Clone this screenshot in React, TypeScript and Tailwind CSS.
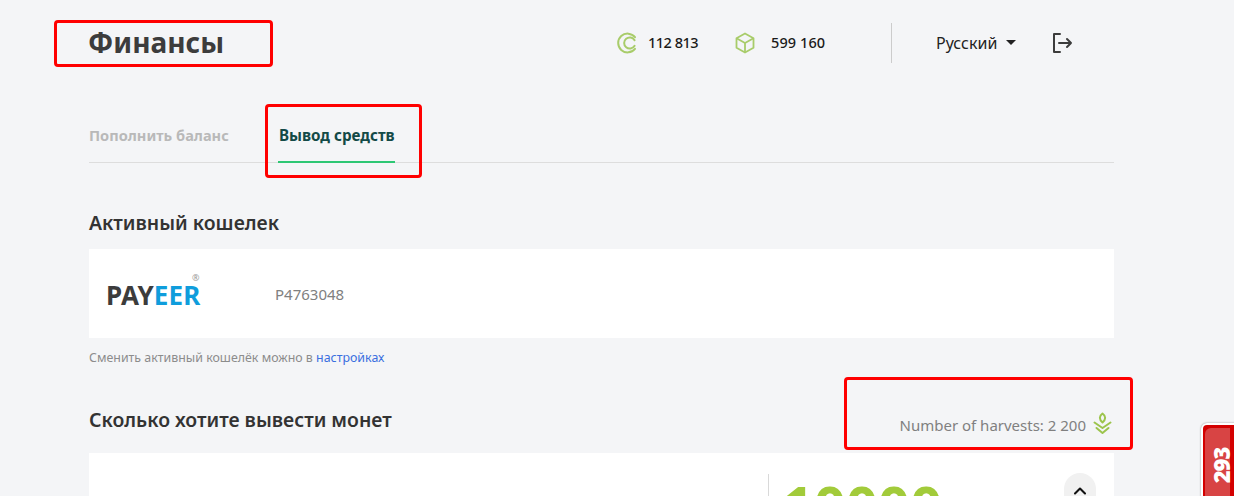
import React from 'react';
import { ChevronUp } from 'lucide-react';

const CoinIcon = () => (
  <svg width="22" height="22" viewBox="0 0 22 22" fill="none" stroke="#a8cc6a" strokeWidth="2" strokeLinecap="round">
    <path d="M19 5.2A9.4 9.4 0 1 0 19 16.8" />
    <path d="M18.6 8.2A5.6 5.6 0 1 0 18.6 13.8" />
  </svg>
);

const BoxIcon = () => (
  <svg width="20" height="22" viewBox="0 0 20 22" fill="none" stroke="#a8cc6a" strokeWidth="1.8" strokeLinejoin="round">
    <path d="M10 1.5 18.5 6.2V15.8L10 20.5 1.5 15.8V6.2Z" />
    <path d="M1.5 6.2 10 11 18.5 6.2M10 11V20.5" />
  </svg>
);

const HarvestIcon = () => (
  <svg width="19" height="23" viewBox="0 0 19 23" fill="none" stroke="#9cc44c" strokeWidth="2" strokeLinecap="round" strokeLinejoin="round">
    <path d="M9.5 1.5C13 4 13 7.5 9.5 10.5 6 7.5 6 4 9.5 1.5Z" />
    <path d="M1.5 10.5 9.5 16 17.5 10.5" />
    <path d="M3.5 16 9.5 21 15.5 16" />
  </svg>
);

const App: React.FC = () => {
  return (
    <div className="relative h-[496px] overflow-hidden bg-[#f4f5f7] pl-[89px] font-['Noto_Sans','Open_Sans',sans-serif]">
      <div className="w-[1025px]">
        {/* Header */}
        <div className="flex h-[85px] items-center">
          <h1 className="-ml-px w-[528px] pb-[2px] text-[28px] font-bold text-[#3c3c3c]">Финансы</h1>
          <CoinIcon />
          <span className="ml-[10px] w-[50px] text-[14.5px] font-medium tracking-[-0.5px] whitespace-nowrap text-[#1a1a1a]">112 813</span>
          <span className="ml-[37px]"><BoxIcon /></span>
          <span className="ml-4 w-[55px] text-[14.5px] font-medium tracking-[0.1px] whitespace-nowrap text-[#1a1a1a]">599 160</span>
          <div className="ml-[65px] h-10 w-px bg-[#cccccc]" />
          <span className="ml-11 w-[61px] text-base text-[#222222]">Русский</span>
          <span className="ml-[9px] h-0 w-0 border-x-[5px] border-t-[5px] border-x-transparent border-t-[#222222]" />
          <svg className="ml-[35px]" width="22" height="22" viewBox="0 0 22 22" fill="none" stroke="#3c3c3c" strokeWidth="2" strokeLinecap="round" strokeLinejoin="round">
            <path d="M9 2H3V20H9" />
            <path d="M8 11H20M16 7l4 4-4 4" />
          </svg>
        </div>

        {/* Tabs */}
        <div className="flex h-[78px] items-end border-b border-[#dddddd]">
          <div className="flex h-[50px] w-[189px] items-center pb-[3px] text-[14.6px] font-bold text-[#b9b9b9]">Пополнить баланс</div>
          <div className="-mb-px flex h-[50px] w-[117px] items-center border-b-2 border-[#2ec774] pb-[3px] pl-px text-[15.2px] font-bold whitespace-nowrap text-[#134a47]">Вывод средств</div>
        </div>

        {/* Wallet */}
        <h2 className="mt-[46px] text-[19.4px] leading-7 font-semibold text-[#333333]">Активный кошелек</h2>
        <div className="mt-3 flex h-[89px] items-center bg-white pl-[17px]">
          <div className="relative w-[169px] pt-[2px] text-[26px] leading-5 font-bold tracking-[0.1px]">
            <span className="text-[#3c3c3c]">PAY</span>
            <span className="text-[#0f9ddc]">EER</span>
            <span className="absolute top-[-10px] left-[86px] text-[9px] leading-[9px] font-normal text-[#999999]">®</span>
          </div>
          <span className="pt-[2px] text-[15px] text-[#808080]">P4763048</span>
        </div>
        <p className="mt-[11px] text-[12.4px] leading-[18px] text-[#8c8c8c]">
          Сменить активный кошелёк можно в <span className="text-[#3b6fe0]">настройках</span>
        </p>

        {/* Amount */}
        <div className="mt-[39px] flex items-end justify-between">
          <h2 className="mb-[2px] text-[19.4px] leading-7 font-semibold text-[#333333]">Сколько хотите вывести монет</h2>
          <div className="mr-[2px] flex items-center gap-[7px] text-[15px] text-[#808080]">
            <span className="pt-[2px]">Number of harvests: 2 200</span>
            <HarvestIcon />
          </div>
        </div>
        <div className="mt-[17px] flex h-[100px] justify-end bg-white pt-[21px] pr-[18px]">
          <div className="flex w-[328px] items-start border-l border-[#d9d9d9] pl-[13px]">
            <span className="mt-[3px] flex-1 text-[56px] leading-none font-bold text-[#a2cb3a]">10000</span>
            <div className="-mt-px flex h-12 w-8 justify-center rounded-full bg-[#f1f1f1] pt-[8px]">
              <ChevronUp size={20} strokeWidth={2.5} className="text-[#111111]" />
            </div>
          </div>
        </div>
      </div>

      {/* Side widget */}
      <div className="absolute top-[423px] left-[1201px] h-[90px] w-[50px] overflow-hidden rounded-tl-md border-2 border-white bg-[#d40000] shadow-[0_0_2px_#888888]">
        <div className="absolute top-[3px] bottom-0 left-[2px] w-[25px] rounded-tl-md bg-[#d84444]" />
        <span className="absolute top-[24px] left-[-1px] w-[38px] -rotate-90 text-center text-[22px] font-black tracking-[-1px] text-white">293</span>
      </div>

      {/* Annotations */}
      <div className="absolute top-5 left-[54px] h-[47px] w-[219px] rounded-sm border-[3px] border-[#ff0000]" />
      <div className="absolute top-[104px] left-[265px] h-[74px] w-[157px] rounded-sm border-[3px] border-[#ff0000]" />
      <div className="absolute top-[377px] left-[844px] h-[73px] w-[289px] rounded-sm border-[3px] border-[#ff0000]" />
    </div>
  );
};

export default App;
